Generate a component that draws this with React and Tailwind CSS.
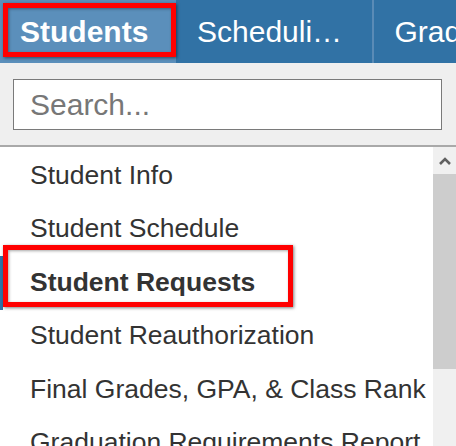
const items = [
  'Student Info',
  'Student Schedule',
  'Student Requests',
  'Student Reauthorization',
  'Final Grades, GPA, & Class Rank',
  'Graduation Requirements Report',
]

export default function App() {
  return (
    <div className="relative w-[456px] h-[446px] overflow-hidden bg-white font-['Liberation_Sans',Arial,sans-serif]">
      {/* top tabs */}
      <div className="flex h-[63px] bg-[#3172a5] text-white text-[30px] leading-none overflow-hidden">
        <div className="shrink-0 flex items-center w-[176px] pl-[20px] bg-[#5b8fbb] font-bold">Students</div>
        <div className="shrink-0 flex items-center w-[196px] pl-[21px] whitespace-nowrap">Scheduli…</div>
        <div className="shrink-0 w-[1.5px] bg-[#5a8bb6]" />
        <div className="shrink-0 flex items-center pl-[21px] whitespace-nowrap">Grades</div>
      </div>

      {/* search */}
      <div className="h-[84px] bg-[#efefef] pt-[16px] pl-[13px] pr-[14px] border-b-[2px] border-[#a9a9a9]">
        <div className="h-[51px] bg-white border-[1.5px] border-[#7a7a7a] flex items-center pl-[16px] text-[30px] text-[#777]">
          Search...
        </div>
      </div>

      {/* menu list */}
      <div className="flex">
        <div className="flex-1 flex flex-col pt-[2px]">
          {items.map((item) => (
            <div
              key={item}
              className={`relative flex items-center h-[53.5px] pl-[30px] text-[26.5px] text-[#333] whitespace-nowrap ${item === 'Student Requests' ? 'font-bold' : ''}`}
            >
              {item === 'Student Requests' && <div className="absolute left-0 top-0 bottom-0 w-[3px] bg-[#2d73a8]" />}
              {item}
            </div>
          ))}
        </div>
        <div className="w-[23px] shrink-0 flex flex-col bg-[#f0f0f0]">
          <div className="h-[27px] flex items-center justify-center">
            <svg width="12" height="8" viewBox="0 0 12 8">
              <path d="M1 7 L6 2 L11 7" fill="none" stroke="#606060" strokeWidth="2.6" />
            </svg>
          </div>
          <div className="h-[195px] bg-[#cdcdcd]" />
        </div>
      </div>

      {/* annotation boxes */}
      <div className="absolute left-[3px] top-[3px] w-[173px] h-[54px] border-[5px] border-[#ff0000] shadow-[1px_1px_3px_rgba(0,0,0,0.5),inset_1px_1px_3px_rgba(0,0,0,0.35)]" />
      <div className="absolute left-[3px] top-[245px] w-[290px] h-[62px] border-[5px] border-[#ff0000] shadow-[1px_1px_3px_rgba(0,0,0,0.5),inset_1px_1px_3px_rgba(0,0,0,0.35)]" />
    </div>
  )
}
